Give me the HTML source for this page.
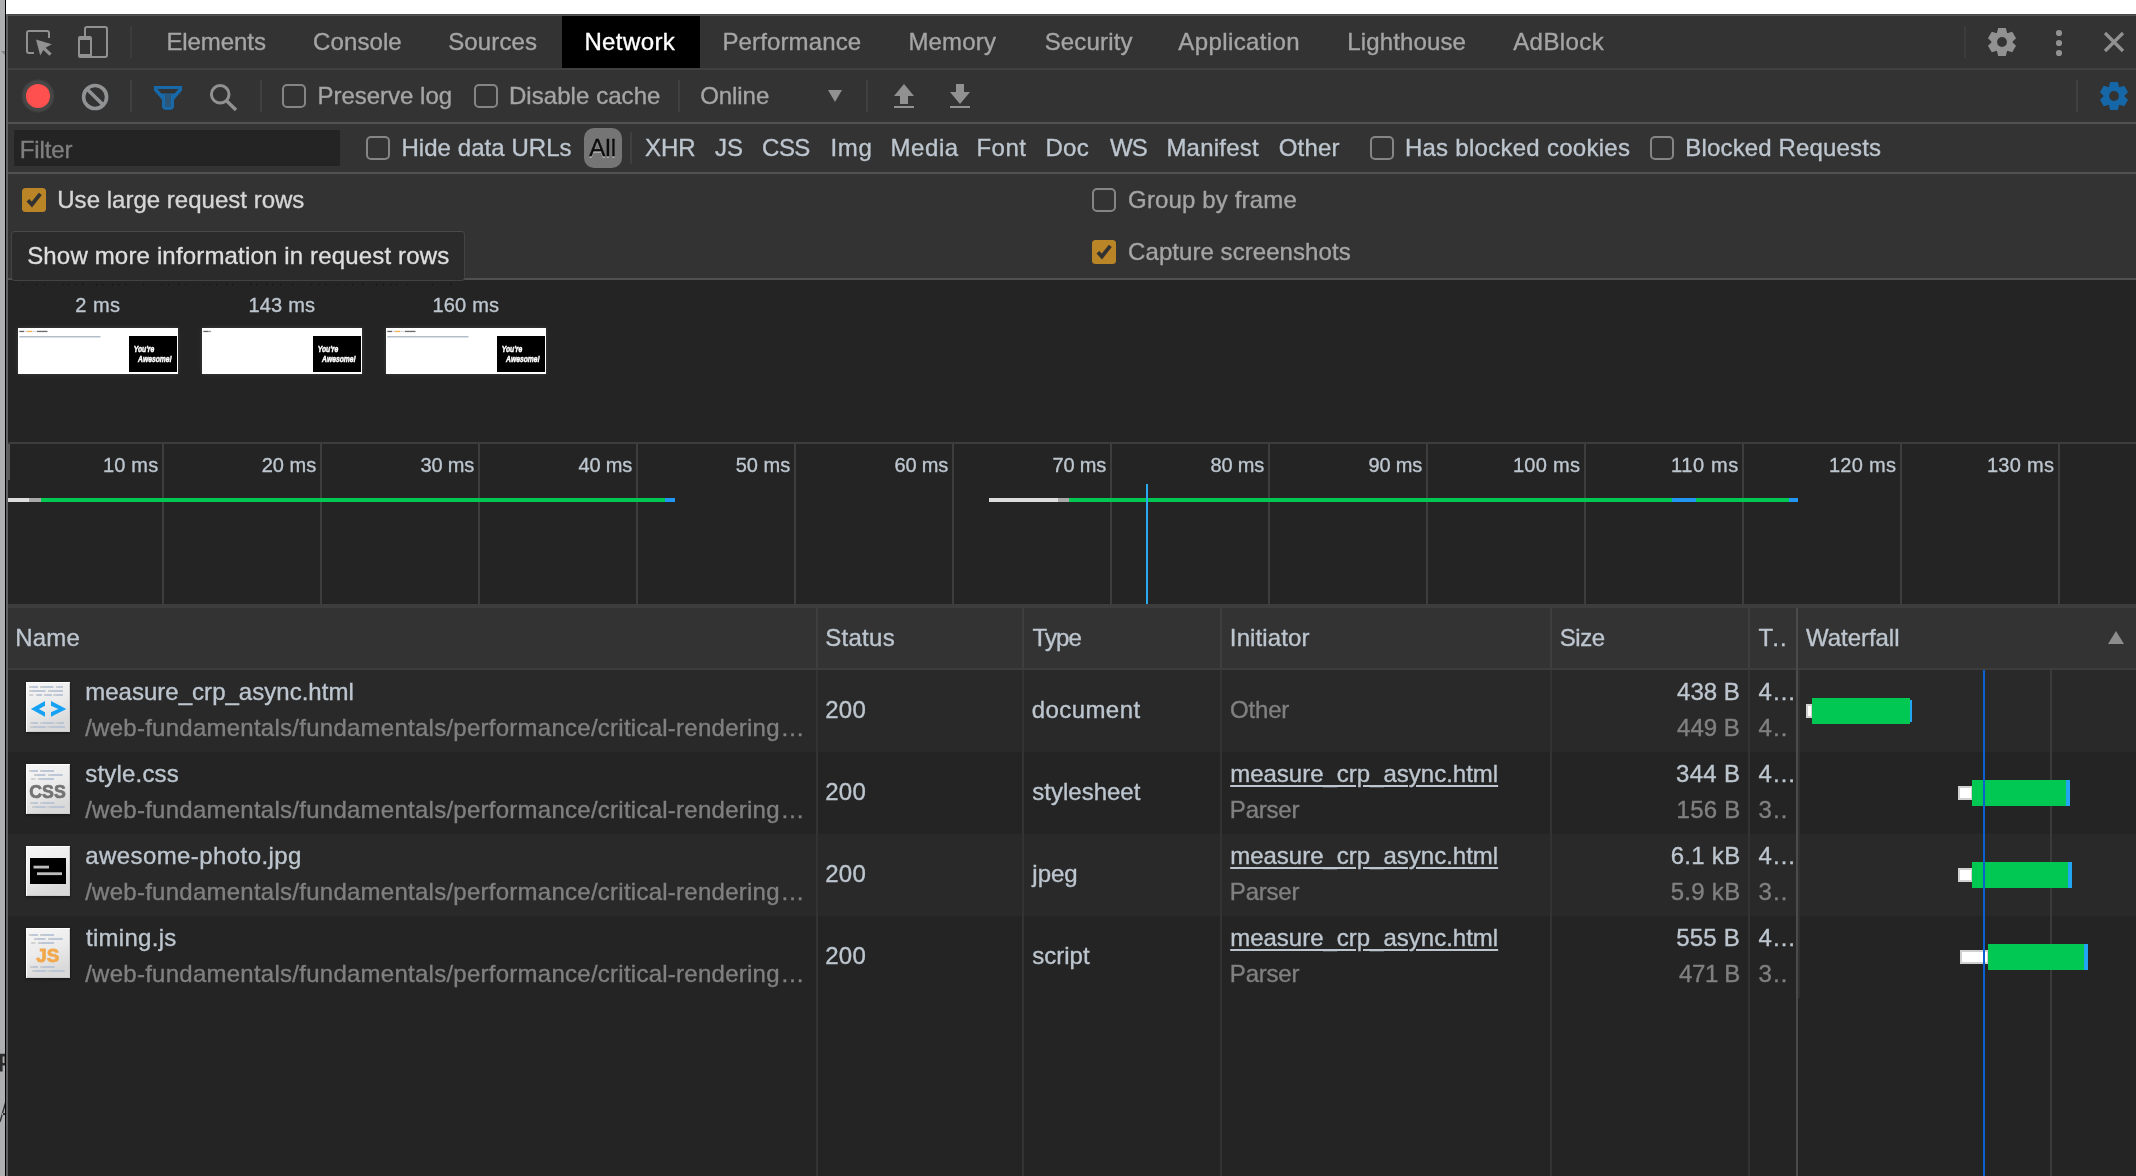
<!DOCTYPE html>
<html>
<head>
<meta charset="utf-8">
<title>DevTools - Network</title>
<style>
html,body{margin:0;padding:0;}
body{width:2136px;height:1176px;overflow:hidden;position:relative;background:#242424;font-family:"Liberation Sans",sans-serif;}
.a{position:absolute;}
.t{position:absolute;white-space:nowrap;line-height:1;font-family:"Liberation Sans",sans-serif;-webkit-text-stroke:0.35px currentColor;}
.cb{position:absolute;width:20px;height:20px;border:2px solid #858585;border-radius:5px;}
.cbon{position:absolute;width:24px;height:24px;border-radius:3.500px;background:#b98526;}
.vs{position:absolute;width:2px;background:#404040;}
.gl{position:absolute;width:2px;top:444px;height:160px;background:#3d3d3d;}
.cs{position:absolute;width:2px;top:670px;height:506px;background:#333333;}
.hs{position:absolute;width:2px;top:608px;height:60px;background:#3e3e3e;}
.shot{will-change:transform;position:absolute;top:328px;width:160px;height:46px;background:#fff;box-shadow:0 0 4px rgba(255,255,255,0.12);}
.ficon{will-change:transform;position:absolute;left:26px;width:44px;height:50px;}
</style>
</head>
<body>
<!-- page behind devtools -->
<div class="a" style="left:0;top:0;width:5px;height:1176px;background:#aeafb1;"></div>
<div class="a" style="left:5px;top:0;width:1px;height:1176px;background:#000;"></div>
<div class="a" style="left:6px;top:0;width:2130px;height:14px;background:#fff;"></div>
<svg class="a" style="left:0;top:0;" width="5" height="1176" viewBox="0 0 5 1176">
  <path d="M0.8 51H5V55.2Z" fill="#87888a"/>
  <path d="M0 1053.8H5V1056.4H2.600V1063H5V1065.600H2.600V1071.500H0Z" fill="#2c2c2c"/>
  <path d="M4.400 1056H5V1063.500H4.400Z" fill="#444"/>
  <path d="M5 1102L0 1119.500V1122.500L1 1121L5 1107Z M2.200 1113H5V1115H1.700Z" fill="#2c2c2c"/>
</svg>

<!-- toolbars background -->
<div class="a" style="left:6px;top:14px;width:2130px;height:264px;background:#333333;"></div>
<div class="a" style="left:6px;top:14px;width:2130px;height:1px;background:#474747;"></div><div class="a" style="left:6px;top:15px;width:2130px;height:1px;background:#525252;"></div>
<div class="a" style="left:6px;top:68px;width:2130px;height:2px;background:#404040;"></div>
<div class="a" style="left:6px;top:122px;width:2130px;height:2px;background:#525252;"></div>
<div class="a" style="left:6px;top:172px;width:2130px;height:2px;background:#525252;"></div>
<div class="a" style="left:6px;top:278px;width:2130px;height:2px;background:#505050;"></div>
<!-- left resizer edge -->
<div class="a" style="left:6px;top:14px;width:2px;height:1162px;background:#5f6062;"></div>

<!-- tab bar -->
<div class="a" style="left:562px;top:16px;width:138px;height:52px;background:#000;"></div>
<div class="vs" style="left:130px;top:26px;height:32px;background:#3c3c3c;"></div>
<div class="vs" style="left:1964px;top:26px;height:32px;background:#3c3c3c;"></div>
<svg class="a" style="left:20px;top:20px;" width="100" height="44" viewBox="20 20 100 44">
  <!-- inspect -->
  <path d="M49 38V33a2 2 0 0 0-2-2H29a2 2 0 0 0-2 2v18a2 2 0 0 0 2 2h5" fill="none" stroke="#919191" stroke-width="2"/>
  <path d="M36 39.6L51.8 44.3L45.6 47.7L51.6 53.6L49.4 55.8L43.4 49.9L40.2 55.6Z" fill="#919191"/>
  <!-- device -->
  <path d="M85 36V29a2 2 0 0 1 2-2h18a2 2 0 0 1 2 2v26a2 2 0 0 1-2 2H90" fill="none" stroke="#919191" stroke-width="2"/>
  <path d="M80 36h10a2 2 0 0 1 2 2v18a2 2 0 0 1-2 2H80a2 2 0 0 1-2-2V38a2 2 0 0 1 2-2zM80 40v14h10V40z" fill="#919191" fill-rule="evenodd"/>
</svg>
<!-- gear, kebab, close -->
<svg class="a" style="left:1984px;top:24px;" width="36" height="36" viewBox="-18 -18 36 36">
  <g fill="#919191"><circle r="10.400"/><path d="M-3.800 -14H3.800L5.300 -8V8L3.800 14H-3.800L-5.300 8V-8Z"/><path d="M-3.800 -14H3.800L5.300 -8V8L3.800 14H-3.800L-5.300 8V-8Z" transform="rotate(60)"/><path d="M-3.800 -14H3.800L5.300 -8V8L3.800 14H-3.800L-5.300 8V-8Z" transform="rotate(120)"/></g><circle r="4.900" fill="#333333"/>
</svg>
<svg class="a" style="left:2050px;top:26px;" width="18" height="34" viewBox="2050 26 18 34">
  <circle cx="2059" cy="33" r="3.1" fill="#919191"/><circle cx="2059" cy="43" r="3.1" fill="#919191"/><circle cx="2059" cy="53" r="3.1" fill="#919191"/>
</svg>
<svg class="a" style="left:2100px;top:28px;" width="28" height="28" viewBox="2100 28 28 28">
  <path d="M2105 33L2123 51M2123 33L2105 51" stroke="#919191" stroke-width="3.2" fill="none"/>
</svg>

<!-- network toolbar -->
<svg class="a" style="left:16px;top:74px;" width="230" height="44" viewBox="16 74 230 44">
  <defs><radialGradient id="halo"><stop offset="0" stop-color="#464646"/><stop offset="0.860" stop-color="#464646"/><stop offset="1" stop-color="#464646" stop-opacity="0"/></radialGradient></defs><circle cx="38" cy="96" r="17.200" fill="url(#halo)"/>
  <circle cx="38" cy="96" r="12.100" fill="#ff5050"/>
  <circle cx="95.100" cy="97" r="11.500" fill="none" stroke="#919293" stroke-width="3.600"/>
  <path d="M87 88.900L103.200 105.100" stroke="#919293" stroke-width="3.600"/>
  <!-- filter funnel -->
  <path d="M154 86H182V90.5L174 99.8V106.5Q174 110 168 110Q162 110 162 106.5V99.8L154 90.5Z" fill="#1769aa"/>
  <path d="M157.5 89H178.5L174.6 93.6H161.4Z" fill="#333333"/>
  <path d="M164.2 94.5H171.8L171 96V107H165V96Z" fill="#2b5677"/>
  <!-- search -->
  <circle cx="220.2" cy="94.3" r="8.8" fill="none" stroke="#919191" stroke-width="3"/>
  <path d="M226.5 100.8L236 110" stroke="#919191" stroke-width="3.4"/>
</svg>
<div class="vs" style="left:130px;top:80px;height:32px;"></div>
<div class="vs" style="left:260px;top:80px;height:32px;"></div>
<div class="cb" style="left:282px;top:84px;"></div>
<div class="cb" style="left:474px;top:84px;"></div>
<div class="vs" style="left:678px;top:80px;height:32px;"></div>
<svg class="a" style="left:826px;top:82px;" width="150" height="28" viewBox="826 82 150 28">
  <path d="M828 90H842L835 102Z" fill="#919191"/>
  <path d="M904 84L914 96H908V104H900V96H894ZM894 106H914V108H894Z" fill="#919191"/>
  <path d="M956 84H964V92H970L960 104L950 92H956ZM950 106H970V108H950Z" fill="#919191"/>
</svg>
<div class="vs" style="left:866px;top:80px;height:32px;"></div>
<div class="vs" style="left:2076px;top:80px;height:32px;"></div>
<svg class="a" style="left:2096px;top:78px;" width="36" height="36" viewBox="-18 -18 36 36">
  <g fill="#1567a8"><circle r="10.400"/><path d="M-3.800 -14H3.800L5.300 -8V8L3.800 14H-3.800L-5.300 8V-8Z"/><path d="M-3.800 -14H3.800L5.300 -8V8L3.800 14H-3.800L-5.300 8V-8Z" transform="rotate(60)"/><path d="M-3.800 -14H3.800L5.300 -8V8L3.800 14H-3.800L-5.300 8V-8Z" transform="rotate(120)"/></g><circle r="4.900" fill="#333333"/>
</svg>

<!-- filter bar -->
<div class="a" style="left:14px;top:130px;width:326px;height:36px;background:#242424;"></div>
<div class="cb" style="left:366px;top:136px;"></div>
<div class="a" style="left:584px;top:128px;width:38px;height:40px;border-radius:10px;background:#757575;"></div>
<div class="a" style="left:630px;top:132px;width:2px;height:32px;background:#404040;"></div>
<div class="cb" style="left:1370px;top:136px;"></div>
<div class="cb" style="left:1650px;top:136px;"></div>

<!-- settings pane -->
<div class="cbon" style="left:22px;top:188px;"><svg width="24" height="24"><path d="M5.900 12.200L9.900 16.500L18.300 5.800" fill="none" stroke="#323232" stroke-width="3.800"/></svg></div>
<div class="cb" style="left:1092px;top:188px;"></div>
<div class="cbon" style="left:1092px;top:240px;"><svg width="24" height="24"><path d="M5.900 12.200L9.900 16.500L18.300 5.800" fill="none" stroke="#323232" stroke-width="3.800"/></svg></div>
<!-- tooltip -->
<div class="a" style="left:11px;top:231px;width:452px;height:48px;background:#2b2b2b;border:1px solid #434343;border-top-color:#4a4a4a;border-radius:4px;"></div>

<svg class="a" style="left:0;top:280px;" width="470" height="8" viewBox="0 280 470 8"><path d="M22 284h1.200v1.200h-1.200zM36 284h1.200v1.200h-1.200zM44 284h1.200v1.200h-1.200zM62 284h1.200v1.200h-1.200zM68 284h1.200v1.200h-1.200zM75 284h1.200v1.200h-1.200zM82 284h1.200v1.200h-1.200zM96 284h1.200v1.200h-1.200zM102 284h1.200v1.200h-1.200zM112 284h1.200v1.200h-1.200zM118 284h1.200v1.200h-1.200zM125 284h1.200v1.200h-1.200zM143 284h1.200v1.200h-1.200zM161 284h1.200v1.200h-1.200zM168 284h1.200v1.200h-1.200zM178 284h1.200v1.200h-1.200zM185 284h1.200v1.200h-1.200zM203 284h1.200v1.200h-1.200zM209 284h1.200v1.200h-1.200zM216 284h1.200v1.200h-1.200zM226 284h1.200v1.200h-1.200zM232 284h1.200v1.200h-1.200zM250 284h1.200v1.200h-1.200zM256 284h1.200v1.200h-1.200zM266 284h1.200v1.200h-1.200zM272 284h1.200v1.200h-1.200zM280 284h1.200v1.200h-1.200zM292 284h1.200v1.200h-1.200zM310 284h1.200v1.200h-1.200zM318 284h1.200v1.200h-1.200zM325 284h1.200v1.200h-1.200zM337 284h1.200v1.200h-1.200zM345 284h1.200v1.200h-1.200zM352 284h1.200v1.200h-1.200zM362 284h1.200v1.200h-1.200zM376 284h1.200v1.200h-1.200zM383 284h1.200v1.200h-1.200zM390 284h1.200v1.200h-1.200zM396 284h1.200v1.200h-1.200zM406 284h1.200v1.200h-1.200zM432 284h1.200v1.200h-1.200zM450 284h1.200v1.200h-1.200z" fill="#101010"/></svg>
<!-- filmstrip -->
<div class="shot" style="left:18px;"><svg width="160" height="46" viewBox="0 0 160 46">
  <rect x="1.300" y="2.800" width="4.700" height="1.300" fill="#666"/><rect x="6" y="2.800" width="3" height="1.300" fill="#ddd"/><rect x="9" y="2.800" width="5" height="1.300" fill="#f0b050"/><rect x="14" y="2.800" width="5" height="1.300" fill="#ddd"/><rect x="19" y="2.800" width="10.500" height="1.300" fill="#6a6a6a"/>
  <rect x="1.400" y="8" width="81" height="1.500" fill="#b4bdc9"/>
  <rect x="111" y="8" width="48" height="36" fill="#000"/>
  <text x="115.700" y="23.900" font-family="Liberation Sans" font-weight="bold" font-style="italic" font-size="9.500" fill="#fff" stroke="#fff" stroke-width="0.500" textLength="20.500" lengthAdjust="spacingAndGlyphs">You're</text>
  <text x="120" y="33.900" font-family="Liberation Sans" font-weight="bold" font-style="italic" font-size="9.500" fill="#fff" stroke="#fff" stroke-width="0.500" textLength="33.800" lengthAdjust="spacingAndGlyphs">Awesome!</text>
</svg></div>
<div class="shot" style="left:202px;"><svg width="160" height="46" viewBox="0 0 160 46">
  <rect x="1.300" y="2.800" width="4.700" height="1.300" fill="#666"/><rect x="6" y="2.800" width="3" height="1.300" fill="#999"/>
  <rect x="111" y="8" width="48" height="36" fill="#000"/>
  <text x="115.700" y="23.900" font-family="Liberation Sans" font-weight="bold" font-style="italic" font-size="9.500" fill="#fff" stroke="#fff" stroke-width="0.500" textLength="20.500" lengthAdjust="spacingAndGlyphs">You're</text>
  <text x="120" y="33.900" font-family="Liberation Sans" font-weight="bold" font-style="italic" font-size="9.500" fill="#fff" stroke="#fff" stroke-width="0.500" textLength="33.800" lengthAdjust="spacingAndGlyphs">Awesome!</text>
</svg></div>
<div class="shot" style="left:386px;"><svg width="160" height="46" viewBox="0 0 160 46">
  <rect x="1.300" y="2.800" width="4.700" height="1.300" fill="#666"/><rect x="6" y="2.800" width="3" height="1.300" fill="#ddd"/><rect x="9" y="2.800" width="5" height="1.300" fill="#f0b050"/><rect x="14" y="2.800" width="5" height="1.300" fill="#ddd"/><rect x="19" y="2.800" width="10.500" height="1.300" fill="#6a6a6a"/>
  <rect x="1.400" y="8" width="81" height="1.500" fill="#b4bdc9"/>
  <rect x="111" y="8" width="48" height="36" fill="#000"/>
  <text x="115.700" y="23.900" font-family="Liberation Sans" font-weight="bold" font-style="italic" font-size="9.500" fill="#fff" stroke="#fff" stroke-width="0.500" textLength="20.500" lengthAdjust="spacingAndGlyphs">You're</text>
  <text x="120" y="33.900" font-family="Liberation Sans" font-weight="bold" font-style="italic" font-size="9.500" fill="#fff" stroke="#fff" stroke-width="0.500" textLength="33.800" lengthAdjust="spacingAndGlyphs">Awesome!</text>
</svg></div>

<!-- overview -->
<div class="a" style="left:8px;top:442px;width:2128px;height:2px;background:#3d3d3d;"></div>
<div class="a" style="left:8px;top:444px;width:2px;height:36px;background:#5a5a5a;"></div>
<div class="gl" style="left:162px;"></div><div class="gl" style="left:320px;"></div><div class="gl" style="left:478px;"></div>
<div class="gl" style="left:636px;"></div><div class="gl" style="left:794px;"></div><div class="gl" style="left:952px;"></div>
<div class="gl" style="left:1110px;"></div><div class="gl" style="left:1268px;"></div><div class="gl" style="left:1426px;"></div>
<div class="gl" style="left:1584px;"></div><div class="gl" style="left:1742px;"></div><div class="gl" style="left:1900px;"></div>
<div class="gl" style="left:2058px;"></div>
<!-- overview bars -->
<div class="a" style="left:8px;top:498px;width:21px;height:4px;background:#dcdcdc;"></div>
<div class="a" style="left:29px;top:498px;width:12px;height:4px;background:#a8a8a8;"></div>
<div class="a" style="left:41px;top:498px;width:624px;height:4px;background:#00c853;"></div>
<div class="a" style="left:665px;top:498px;width:10px;height:4px;background:#2196f3;"></div>
<div class="a" style="left:989px;top:498px;width:69px;height:4px;background:#dcdcdc;"></div>
<div class="a" style="left:1058px;top:498px;width:11px;height:4px;background:#a8a8a8;"></div>
<div class="a" style="left:1069px;top:498px;width:603px;height:4px;background:#00c853;"></div>
<div class="a" style="left:1672px;top:498px;width:24px;height:4px;background:#2196f3;"></div>
<div class="a" style="left:1696px;top:498px;width:93px;height:4px;background:#00c853;"></div>
<div class="a" style="left:1789px;top:498px;width:9px;height:4px;background:#2196f3;"></div>
<div class="a" style="left:1146px;top:484px;width:2px;height:120px;background:#29a9ee;"></div>

<!-- grid header -->
<div class="a" style="left:8px;top:604px;width:2128px;height:4px;background:#3d3d3d;"></div>
<div class="a" style="left:8px;top:608px;width:2128px;height:60px;background:#333333;"></div>
<div class="a" style="left:8px;top:668px;width:2128px;height:2px;background:#3d3d3d;"></div>
<div class="hs" style="left:816px;"></div><div class="hs" style="left:1022px;"></div><div class="hs" style="left:1220px;"></div>
<div class="hs" style="left:1550px;"></div><div class="hs" style="left:1748px;"></div>
<svg class="a" style="left:2106px;top:630px;" width="20" height="16"><path d="M10 1L18 14H2Z" fill="#8d8d8d"/></svg>

<!-- rows -->
<div class="a" style="left:8px;top:670px;width:2128px;height:82px;background:#292929;"></div>
<div class="a" style="left:8px;top:834px;width:2128px;height:82px;background:#292929;"></div>
<div class="cs" style="left:816px;"></div><div class="cs" style="left:1022px;"></div><div class="cs" style="left:1220px;"></div>
<div class="cs" style="left:1550px;"></div><div class="cs" style="left:1748px;"></div>
<div class="a" style="left:1796px;top:608px;width:2px;height:568px;background:#4b4b4b;"></div>
<div class="a" style="left:1798px;top:670px;width:2px;height:328px;background:#303030;"></div>
<div class="a" style="left:2050px;top:670px;width:2px;height:506px;background:#3a3a3a;"></div>

<!-- waterfall bars -->
<div class="a" style="left:1806px;top:704px;width:3px;height:10px;background:#fff;border:2px solid #d0d0d0;border-right-width:1px;"></div>
<div class="a" style="left:1812px;top:698px;width:98px;height:26px;background:#00c853;"></div>
<div class="a" style="left:1910px;top:700px;width:2px;height:22px;background:#22a6f2;"></div>

<div class="a" style="left:1958px;top:786px;width:11px;height:10px;background:#fff;border:2px solid #d0d0d0;border-right-width:1px;"></div>
<div class="a" style="left:1972px;top:780px;width:94px;height:26px;background:#00c853;"></div>
<div class="a" style="left:2066px;top:780px;width:4px;height:26px;background:#22a6f2;"></div>

<div class="a" style="left:1958px;top:868px;width:11px;height:10px;background:#fff;border:2px solid #d0d0d0;border-right-width:1px;"></div>
<div class="a" style="left:1972px;top:862px;width:96px;height:26px;background:#00c853;"></div>
<div class="a" style="left:2068px;top:862px;width:4px;height:26px;background:#22a6f2;"></div>

<div class="a" style="left:1960px;top:950px;width:25px;height:10px;background:#fff;border:2px solid #d0d0d0;border-right-width:1px;"></div>
<div class="a" style="left:1988px;top:944px;width:96px;height:26px;background:#00c853;"></div>
<div class="a" style="left:2084px;top:944px;width:4px;height:26px;background:#22a6f2;"></div>

<div class="a" style="left:1983px;top:670px;width:2px;height:506px;background:#0b62cf;"></div>

<!-- file icons -->
<svg class="ficon" style="top:682px;filter:drop-shadow(0 1px 1.500px rgba(0,0,0,0.420));" viewBox="0 0 44 50"><defs><linearGradient id="pg" x1="0" y1="0" x2="0.350" y2="1"><stop offset="0" stop-color="#f7f7f7"/><stop offset="0.550" stop-color="#ebebeb"/><stop offset="1" stop-color="#d9d9d9"/></linearGradient></defs><rect x="0" y="0" width="44" height="50" fill="url(#pg)"/><path d="M0.500 50V0.500H44" fill="none" stroke="#ffffff" stroke-width="1"/><path d="M43.500 1V49.500H1" fill="none" stroke="#cdcdcd" stroke-width="1"/><rect x="3.5" y="4.1" width="8.5" height="1.800" fill="#b7c3d4"/><rect x="3.5" y="4.1" width="2.8" height="1.800" fill="#cdcdcd"/><rect x="14.0" y="4.1" width="13.5" height="1.800" fill="#b7c3d4"/><rect x="14.0" y="4.1" width="3.0" height="1.800" fill="#cdcdcd"/><rect x="30.0" y="4.1" width="7.0" height="1.800" fill="#b7c3d4"/><rect x="30.0" y="4.1" width="2.3" height="1.800" fill="#cdcdcd"/><rect x="3.5" y="8.1" width="16.0" height="1.800" fill="#b7c3d4"/><rect x="3.5" y="8.1" width="3.0" height="1.800" fill="#cdcdcd"/><rect x="22.0" y="8.1" width="15.0" height="1.800" fill="#b7c3d4"/><rect x="22.0" y="8.1" width="3.0" height="1.800" fill="#cdcdcd"/><rect x="3.5" y="12.1" width="4.0" height="1.800" fill="#d0d0d0"/><rect x="3.5" y="12.1" width="1.3" height="1.800" fill="#cdcdcd"/><rect x="10.0" y="12.1" width="6.0" height="1.800" fill="#b7c3d4"/><rect x="10.0" y="12.1" width="2.0" height="1.800" fill="#cdcdcd"/><rect x="18.0" y="12.1" width="8.0" height="1.800" fill="#b7c3d4"/><rect x="18.0" y="12.1" width="2.7" height="1.800" fill="#cdcdcd"/><rect x="27.5" y="12.1" width="9.5" height="1.800" fill="#b7c3d4"/><rect x="27.5" y="12.1" width="3.0" height="1.800" fill="#cdcdcd"/><rect x="4.3" y="40.1" width="7.7" height="1.800" fill="#b7c3d4"/><rect x="4.3" y="40.1" width="2.6" height="1.800" fill="#cdcdcd"/><rect x="14.0" y="40.1" width="14.0" height="1.800" fill="#b7c3d4"/><rect x="14.0" y="40.1" width="3.0" height="1.800" fill="#cdcdcd"/><rect x="29.5" y="40.1" width="8.5" height="1.800" fill="#b7c3d4"/><rect x="29.5" y="40.1" width="2.8" height="1.800" fill="#cdcdcd"/><rect x="4.0" y="44.1" width="16.0" height="1.800" fill="#b7c3d4"/><rect x="4.0" y="44.1" width="3.0" height="1.800" fill="#cdcdcd"/><rect x="21.5" y="44.1" width="17.5" height="1.800" fill="#b7c3d4"/><rect x="21.5" y="44.1" width="3.0" height="1.800" fill="#cdcdcd"/><path d="M4.900 27L19 19V23.800L12.900 27L19 30.200V34.800Z M40.300 27L25 19V23.800L32.300 27L25 30.200V34.800Z" fill="#16a1f5"/></svg>
<svg class="ficon" style="top:764px;filter:drop-shadow(0 1px 1.500px rgba(0,0,0,0.420));" viewBox="0 0 44 50"><rect x="0" y="0" width="44" height="50" fill="url(#pg)"/><path d="M0.500 50V0.500H44" fill="none" stroke="#ffffff" stroke-width="1"/><path d="M43.500 1V49.500H1" fill="none" stroke="#cdcdcd" stroke-width="1"/><rect x="3.5" y="6.1" width="8.5" height="1.800" fill="#b7c3d4"/><rect x="3.5" y="6.1" width="2.8" height="1.800" fill="#cdcdcd"/><rect x="14.0" y="6.1" width="14.0" height="1.800" fill="#b7c3d4"/><rect x="14.0" y="6.1" width="3.0" height="1.800" fill="#cdcdcd"/><rect x="8.0" y="10.1" width="11.5" height="1.800" fill="#b7c3d4"/><rect x="8.0" y="10.1" width="3.0" height="1.800" fill="#cdcdcd"/><rect x="22.0" y="10.1" width="14.7" height="1.800" fill="#b7c3d4"/><rect x="22.0" y="10.1" width="3.0" height="1.800" fill="#cdcdcd"/><rect x="5.4" y="14.1" width="4.1" height="1.800" fill="#d0d0d0"/><rect x="5.4" y="14.1" width="1.4" height="1.800" fill="#cdcdcd"/><rect x="12.0" y="14.1" width="16.0" height="1.800" fill="#b7c3d4"/><rect x="12.0" y="14.1" width="3.0" height="1.800" fill="#cdcdcd"/><rect x="4.3" y="38.1" width="7.7" height="1.800" fill="#b7c3d4"/><rect x="4.3" y="38.1" width="2.6" height="1.800" fill="#cdcdcd"/><rect x="14.0" y="38.1" width="14.5" height="1.800" fill="#b7c3d4"/><rect x="14.0" y="38.1" width="3.0" height="1.800" fill="#cdcdcd"/><rect x="6.0" y="42.1" width="14.0" height="1.800" fill="#b7c3d4"/><rect x="6.0" y="42.1" width="3.0" height="1.800" fill="#cdcdcd"/><rect x="21.5" y="42.1" width="17.1" height="1.800" fill="#b7c3d4"/><rect x="21.5" y="42.1" width="3.0" height="1.800" fill="#cdcdcd"/><text x="3.300" y="33.700" font-family="Liberation Sans" font-weight="bold" font-size="19" fill="#737373" stroke="#737373" stroke-width="0.700" textLength="36.500" lengthAdjust="spacingAndGlyphs">CSS</text></svg>
<svg class="ficon" style="top:846px;filter:drop-shadow(0 1px 1.500px rgba(0,0,0,0.420));" viewBox="0 0 44 50"><rect x="0" y="0" width="44" height="50" fill="url(#pg)"/><path d="M0.500 50V0.500H44" fill="none" stroke="#ffffff" stroke-width="1"/><path d="M43.500 1V49.500H1" fill="none" stroke="#cdcdcd" stroke-width="1"/><rect x="4" y="12" width="36" height="26" fill="#000"/><rect x="7.500" y="19.700" width="15.500" height="2.800" fill="#bdbdbd"/><rect x="11" y="26.300" width="25" height="2.800" fill="#bdbdbd"/></svg>
<svg class="ficon" style="top:928px;filter:drop-shadow(0 1px 1.500px rgba(0,0,0,0.420));" viewBox="0 0 44 50"><rect x="0" y="0" width="44" height="50" fill="url(#pg)"/><path d="M0.500 50V0.500H44" fill="none" stroke="#ffffff" stroke-width="1"/><path d="M43.500 1V49.500H1" fill="none" stroke="#cdcdcd" stroke-width="1"/><rect x="3.5" y="6.1" width="8.5" height="1.800" fill="#b7c3d4"/><rect x="3.5" y="6.1" width="2.8" height="1.800" fill="#cdcdcd"/><rect x="14.0" y="6.1" width="14.0" height="1.800" fill="#b7c3d4"/><rect x="14.0" y="6.1" width="3.0" height="1.800" fill="#cdcdcd"/><rect x="8.0" y="10.1" width="11.5" height="1.800" fill="#b7c3d4"/><rect x="8.0" y="10.1" width="3.0" height="1.800" fill="#cdcdcd"/><rect x="22.0" y="10.1" width="14.7" height="1.800" fill="#b7c3d4"/><rect x="22.0" y="10.1" width="3.0" height="1.800" fill="#cdcdcd"/><rect x="5.4" y="14.1" width="4.1" height="1.800" fill="#d0d0d0"/><rect x="5.4" y="14.1" width="1.4" height="1.800" fill="#cdcdcd"/><rect x="12.0" y="14.1" width="16.0" height="1.800" fill="#b7c3d4"/><rect x="12.0" y="14.1" width="3.0" height="1.800" fill="#cdcdcd"/><rect x="4.3" y="38.1" width="7.7" height="1.800" fill="#b7c3d4"/><rect x="4.3" y="38.1" width="2.6" height="1.800" fill="#cdcdcd"/><rect x="14.0" y="38.1" width="14.5" height="1.800" fill="#b7c3d4"/><rect x="14.0" y="38.1" width="3.0" height="1.800" fill="#cdcdcd"/><rect x="6.0" y="42.1" width="14.0" height="1.800" fill="#b7c3d4"/><rect x="6.0" y="42.1" width="3.0" height="1.800" fill="#cdcdcd"/><rect x="21.5" y="42.1" width="17.1" height="1.800" fill="#b7c3d4"/><rect x="21.5" y="42.1" width="3.0" height="1.800" fill="#cdcdcd"/><text x="10.200" y="34.200" font-family="Liberation Sans" font-weight="bold" font-size="19" fill="#f2a94e" stroke="#f2a94e" stroke-width="0.800" textLength="23" lengthAdjust="spacingAndGlyphs">JS</text></svg>

<div id="txt" style="position:absolute;left:0;top:0;width:2136px;height:1176px;will-change:transform;">
<span class="t" style="left:166.40px;top:29.7px;font-size:24px;color:#a5a5a5;letter-spacing:-0.069px;">Elements</span>
<span class="t" style="left:313.12px;top:29.7px;font-size:24px;color:#a5a5a5;letter-spacing:0.080px;">Console</span>
<span class="t" style="left:448.20px;top:29.7px;font-size:24px;color:#a5a5a5;letter-spacing:0.133px;">Sources</span>
<span class="t" style="left:722.40px;top:29.7px;font-size:24px;color:#a5a5a5;letter-spacing:0.144px;">Performance</span>
<span class="t" style="left:908.40px;top:29.7px;font-size:24px;color:#a5a5a5;letter-spacing:0.192px;">Memory</span>
<span class="t" style="left:1044.70px;top:29.7px;font-size:24px;color:#a5a5a5;letter-spacing:0.160px;">Security</span>
<span class="t" style="left:1178.36px;top:29.7px;font-size:24px;color:#a5a5a5;letter-spacing:0.384px;">Application</span>
<span class="t" style="left:1347.24px;top:29.7px;font-size:24px;color:#a5a5a5;letter-spacing:0.142px;">Lighthouse</span>
<span class="t" style="left:1513.20px;top:29.7px;font-size:24px;color:#a5a5a5;letter-spacing:0.427px;">AdBlock</span>
<span class="t" style="left:584.40px;top:29.7px;font-size:24px;color:#ffffff;letter-spacing:0.400px;">Network</span>
<span class="t" style="left:317.40px;top:83.7px;font-size:24px;color:#a5a5a5;letter-spacing:0.000px;">Preserve log</span>
<span class="t" style="left:508.90px;top:83.7px;font-size:24px;color:#a5a5a5;letter-spacing:0.067px;">Disable cache</span>
<span class="t" style="left:700.20px;top:83.7px;font-size:24px;color:#a5a5a5;letter-spacing:-0.064px;">Online</span>
<span class="t" style="left:19.86px;top:137.9px;font-size:24px;color:#7f7f7f;letter-spacing:-0.160px;">Filter</span>
<span class="t" style="left:401.40px;top:135.7px;font-size:24px;color:#bdc6cf;letter-spacing:0.062px;">Hide data URLs</span>
<span class="t" style="left:589.24px;top:135.9px;font-size:24px;color:#0c0c0c;letter-spacing:0.080px;text-shadow:0 1.5px 0 rgba(255,255,255,0.38);">All</span>
<span class="t" style="left:645.12px;top:135.7px;font-size:24px;color:#bdc6cf;letter-spacing:-0.160px;">XHR</span>
<span class="t" style="left:715.00px;top:135.7px;font-size:24px;color:#bdc6cf;letter-spacing:0.000px;">JS</span>
<span class="t" style="left:762.12px;top:135.7px;font-size:24px;color:#bdc6cf;letter-spacing:-0.560px;">CSS</span>
<span class="t" style="left:830.48px;top:135.7px;font-size:24px;color:#bdc6cf;letter-spacing:0.640px;">Img</span>
<span class="t" style="left:890.40px;top:135.7px;font-size:24px;color:#bdc6cf;letter-spacing:0.600px;">Media</span>
<span class="t" style="left:976.40px;top:135.7px;font-size:24px;color:#bdc6cf;letter-spacing:0.533px;">Font</span>
<span class="t" style="left:1045.40px;top:135.7px;font-size:24px;color:#bdc6cf;letter-spacing:0.400px;">Doc</span>
<span class="t" style="left:1110.00px;top:135.7px;font-size:24px;color:#bdc6cf;letter-spacing:-0.800px;">WS</span>
<span class="t" style="left:1166.40px;top:135.7px;font-size:24px;color:#bdc6cf;letter-spacing:0.229px;">Manifest</span>
<span class="t" style="left:1278.74px;top:135.7px;font-size:24px;color:#bdc6cf;letter-spacing:0.200px;">Other</span>
<span class="t" style="left:1404.90px;top:135.7px;font-size:24px;color:#bdc6cf;letter-spacing:0.276px;">Has blocked cookies</span>
<span class="t" style="left:1685.36px;top:135.7px;font-size:24px;color:#bdc6cf;letter-spacing:0.149px;">Blocked Requests</span>
<span class="t" style="left:57.28px;top:187.7px;font-size:24px;color:#d6d6d6;letter-spacing:0.015px;">Use large request rows</span>
<span class="t" style="left:27.20px;top:243.7px;font-size:24px;color:#dedede;letter-spacing:0.164px;">Show more information in request rows</span>
<span class="t" style="left:1128.08px;top:187.7px;font-size:24px;color:#a5a5a5;letter-spacing:0.148px;">Group by frame</span>
<span class="t" style="left:1128.08px;top:239.7px;font-size:24px;color:#a5a5a5;letter-spacing:0.062px;">Capture screenshots</span>
<span class="t" style="left:75.16px;top:295.1px;font-size:20px;color:#bdc6cf;letter-spacing:0.533px;">2 ms</span>
<span class="t" style="left:248.40px;top:295.1px;font-size:20px;color:#bdc6cf;letter-spacing:0.224px;">143 ms</span>
<span class="t" style="left:432.40px;top:295.1px;font-size:20px;color:#bdc6cf;letter-spacing:0.224px;">160 ms</span>
<span class="t" style="left:102.90px;top:455.1px;font-size:20px;color:#bdc6cf;letter-spacing:0.200px;">10 ms</span>
<span class="t" style="left:261.70px;top:455.1px;font-size:20px;color:#bdc6cf;letter-spacing:0.000px;">20 ms</span>
<span class="t" style="left:420.50px;top:455.1px;font-size:20px;color:#bdc6cf;letter-spacing:-0.200px;">30 ms</span>
<span class="t" style="left:578.50px;top:455.1px;font-size:20px;color:#bdc6cf;letter-spacing:-0.200px;">40 ms</span>
<span class="t" style="left:735.70px;top:455.1px;font-size:20px;color:#bdc6cf;letter-spacing:0.000px;">50 ms</span>
<span class="t" style="left:894.50px;top:455.1px;font-size:20px;color:#bdc6cf;letter-spacing:-0.200px;">60 ms</span>
<span class="t" style="left:1052.50px;top:455.1px;font-size:20px;color:#bdc6cf;letter-spacing:-0.200px;">70 ms</span>
<span class="t" style="left:1210.50px;top:455.1px;font-size:20px;color:#bdc6cf;letter-spacing:-0.200px;">80 ms</span>
<span class="t" style="left:1368.50px;top:455.1px;font-size:20px;color:#bdc6cf;letter-spacing:-0.200px;">90 ms</span>
<span class="t" style="left:1512.90px;top:455.1px;font-size:20px;color:#bdc6cf;letter-spacing:0.320px;">100 ms</span>
<span class="t" style="left:1670.90px;top:455.1px;font-size:20px;color:#bdc6cf;letter-spacing:0.640px;">110 ms</span>
<span class="t" style="left:1828.90px;top:455.1px;font-size:20px;color:#bdc6cf;letter-spacing:0.320px;">120 ms</span>
<span class="t" style="left:1986.90px;top:455.1px;font-size:20px;color:#bdc6cf;letter-spacing:0.320px;">130 ms</span>
<span class="t" style="left:15.28px;top:625.7px;font-size:24px;color:#bdc6cf;letter-spacing:0.213px;">Name</span>
<span class="t" style="left:825.20px;top:625.7px;font-size:24px;color:#bdc6cf;letter-spacing:0.288px;">Status</span>
<span class="t" style="left:1032.46px;top:625.7px;font-size:24px;color:#bdc6cf;letter-spacing:-0.907px;">Type</span>
<span class="t" style="left:1229.86px;top:625.7px;font-size:24px;color:#bdc6cf;letter-spacing:0.120px;">Initiator</span>
<span class="t" style="left:1559.74px;top:625.7px;font-size:24px;color:#bdc6cf;letter-spacing:-0.427px;">Size</span>
<span class="t" style="left:1758.50px;top:625.7px;font-size:24px;color:#bdc6cf;">T</span>
<span class="t" style="left:1771.20px;top:625.7px;font-size:24px;color:#bdc6cf;overflow:hidden;width:17.0px;">…</span>
<span class="t" style="left:1806.00px;top:625.7px;font-size:24px;color:#bdc6cf;letter-spacing:-0.040px;">Waterfall</span>
<span class="t" style="left:85.20px;top:679.7px;font-size:24px;color:#bdc6cf;letter-spacing:0.023px;">measure_crp_async.html</span>
<span class="t" style="left:85.20px;top:715.7px;font-size:24px;color:#808080;letter-spacing:0.256px;">/web-fundamentals/fundamentals/performance/critical-rendering</span>
<span class="t" style="left:780.60px;top:715.7px;font-size:24px;color:#808080;">…</span>
<span class="t" style="left:825.20px;top:697.7px;font-size:24px;color:#bdc6cf;letter-spacing:0.320px;">200</span>
<span class="t" style="left:1031.66px;top:697.7px;font-size:24px;color:#bdc6cf;letter-spacing:0.434px;">document</span>
<span class="t" style="left:1230.12px;top:697.7px;font-size:24px;color:#808080;letter-spacing:-0.200px;">Other</span>
<span class="t" style="left:1677.04px;top:679.7px;font-size:24px;color:#bdc6cf;letter-spacing:0.000px;">438 B</span>
<span class="t" style="left:1677.04px;top:715.7px;font-size:24px;color:#808080;letter-spacing:0.000px;">449 B</span>
<span class="t" style="left:1758.40px;top:680.1px;font-size:24px;color:#bdc6cf;">4</span>
<span class="t" style="left:1772.00px;top:680.1px;font-size:24px;color:#bdc6cf;">…</span>
<span class="t" style="left:1758.40px;top:716.1px;font-size:24px;color:#808080;">4</span>
<span class="t" style="left:1772.00px;top:716.1px;font-size:24px;color:#808080;overflow:hidden;width:17.0px;">…</span>
<span class="t" style="left:85.20px;top:761.7px;font-size:24px;color:#bdc6cf;letter-spacing:0.200px;">style.css</span>
<span class="t" style="left:85.20px;top:797.7px;font-size:24px;color:#808080;letter-spacing:0.256px;">/web-fundamentals/fundamentals/performance/critical-rendering</span>
<span class="t" style="left:780.60px;top:797.7px;font-size:24px;color:#808080;">…</span>
<span class="t" style="left:825.20px;top:779.7px;font-size:24px;color:#bdc6cf;letter-spacing:0.320px;">200</span>
<span class="t" style="left:1032.30px;top:779.7px;font-size:24px;color:#bdc6cf;">stylesheet</span>
<span class="t" style="left:1230.20px;top:761.7px;font-size:24px;color:#bdc6cf;letter-spacing:-0.008px;text-decoration:underline;text-decoration-thickness:2px;text-underline-offset:3px;">measure_crp_async.html</span>
<span class="t" style="left:1229.86px;top:797.7px;font-size:24px;color:#808080;letter-spacing:-0.224px;">Parser</span>
<span class="t" style="left:1676.12px;top:761.7px;font-size:24px;color:#bdc6cf;letter-spacing:0.280px;">344 B</span>
<span class="t" style="left:1676.52px;top:797.7px;font-size:24px;color:#808080;letter-spacing:0.280px;">156 B</span>
<span class="t" style="left:1758.40px;top:762.1px;font-size:24px;color:#bdc6cf;">4</span>
<span class="t" style="left:1772.00px;top:762.1px;font-size:24px;color:#bdc6cf;">…</span>
<span class="t" style="left:1758.40px;top:798.1px;font-size:24px;color:#808080;">3</span>
<span class="t" style="left:1772.00px;top:798.1px;font-size:24px;color:#808080;overflow:hidden;width:17.0px;">…</span>
<span class="t" style="left:85.20px;top:843.7px;font-size:24px;color:#bdc6cf;letter-spacing:0.420px;">awesome-photo.jpg</span>
<span class="t" style="left:85.20px;top:879.7px;font-size:24px;color:#808080;letter-spacing:0.256px;">/web-fundamentals/fundamentals/performance/critical-rendering</span>
<span class="t" style="left:780.60px;top:879.7px;font-size:24px;color:#808080;">…</span>
<span class="t" style="left:825.20px;top:861.7px;font-size:24px;color:#bdc6cf;letter-spacing:0.320px;">200</span>
<span class="t" style="left:1032.30px;top:861.7px;font-size:24px;color:#bdc6cf;">jpeg</span>
<span class="t" style="left:1230.20px;top:843.7px;font-size:24px;color:#bdc6cf;letter-spacing:-0.008px;text-decoration:underline;text-decoration-thickness:2px;text-underline-offset:3px;">measure_crp_async.html</span>
<span class="t" style="left:1229.86px;top:879.7px;font-size:24px;color:#808080;letter-spacing:-0.224px;">Parser</span>
<span class="t" style="left:1670.70px;top:843.7px;font-size:24px;color:#bdc6cf;letter-spacing:0.288px;">6.1 kB</span>
<span class="t" style="left:1670.70px;top:879.7px;font-size:24px;color:#808080;letter-spacing:0.288px;">5.9 kB</span>
<span class="t" style="left:1758.40px;top:844.1px;font-size:24px;color:#bdc6cf;">4</span>
<span class="t" style="left:1772.00px;top:844.1px;font-size:24px;color:#bdc6cf;">…</span>
<span class="t" style="left:1758.40px;top:880.1px;font-size:24px;color:#808080;">3</span>
<span class="t" style="left:1772.00px;top:880.1px;font-size:24px;color:#808080;overflow:hidden;width:17.0px;">…</span>
<span class="t" style="left:86.00px;top:925.7px;font-size:24px;color:#bdc6cf;letter-spacing:0.280px;">timing.js</span>
<span class="t" style="left:85.20px;top:961.7px;font-size:24px;color:#808080;letter-spacing:0.256px;">/web-fundamentals/fundamentals/performance/critical-rendering</span>
<span class="t" style="left:780.60px;top:961.7px;font-size:24px;color:#808080;">…</span>
<span class="t" style="left:825.20px;top:943.7px;font-size:24px;color:#bdc6cf;letter-spacing:0.320px;">200</span>
<span class="t" style="left:1032.30px;top:943.7px;font-size:24px;color:#bdc6cf;">script</span>
<span class="t" style="left:1230.20px;top:925.7px;font-size:24px;color:#bdc6cf;letter-spacing:-0.008px;text-decoration:underline;text-decoration-thickness:2px;text-underline-offset:3px;">measure_crp_async.html</span>
<span class="t" style="left:1229.86px;top:961.7px;font-size:24px;color:#808080;letter-spacing:-0.224px;">Parser</span>
<span class="t" style="left:1676.24px;top:925.7px;font-size:24px;color:#bdc6cf;letter-spacing:0.200px;">555 B</span>
<span class="t" style="left:1678.92px;top:961.7px;font-size:24px;color:#808080;letter-spacing:-0.320px;">471 B</span>
<span class="t" style="left:1758.40px;top:926.1px;font-size:24px;color:#bdc6cf;">4</span>
<span class="t" style="left:1772.00px;top:926.1px;font-size:24px;color:#bdc6cf;">…</span>
<span class="t" style="left:1758.40px;top:962.1px;font-size:24px;color:#808080;">3</span>
<span class="t" style="left:1772.00px;top:962.1px;font-size:24px;color:#808080;overflow:hidden;width:17.0px;">…</span>
</div>
</body>
</html>
